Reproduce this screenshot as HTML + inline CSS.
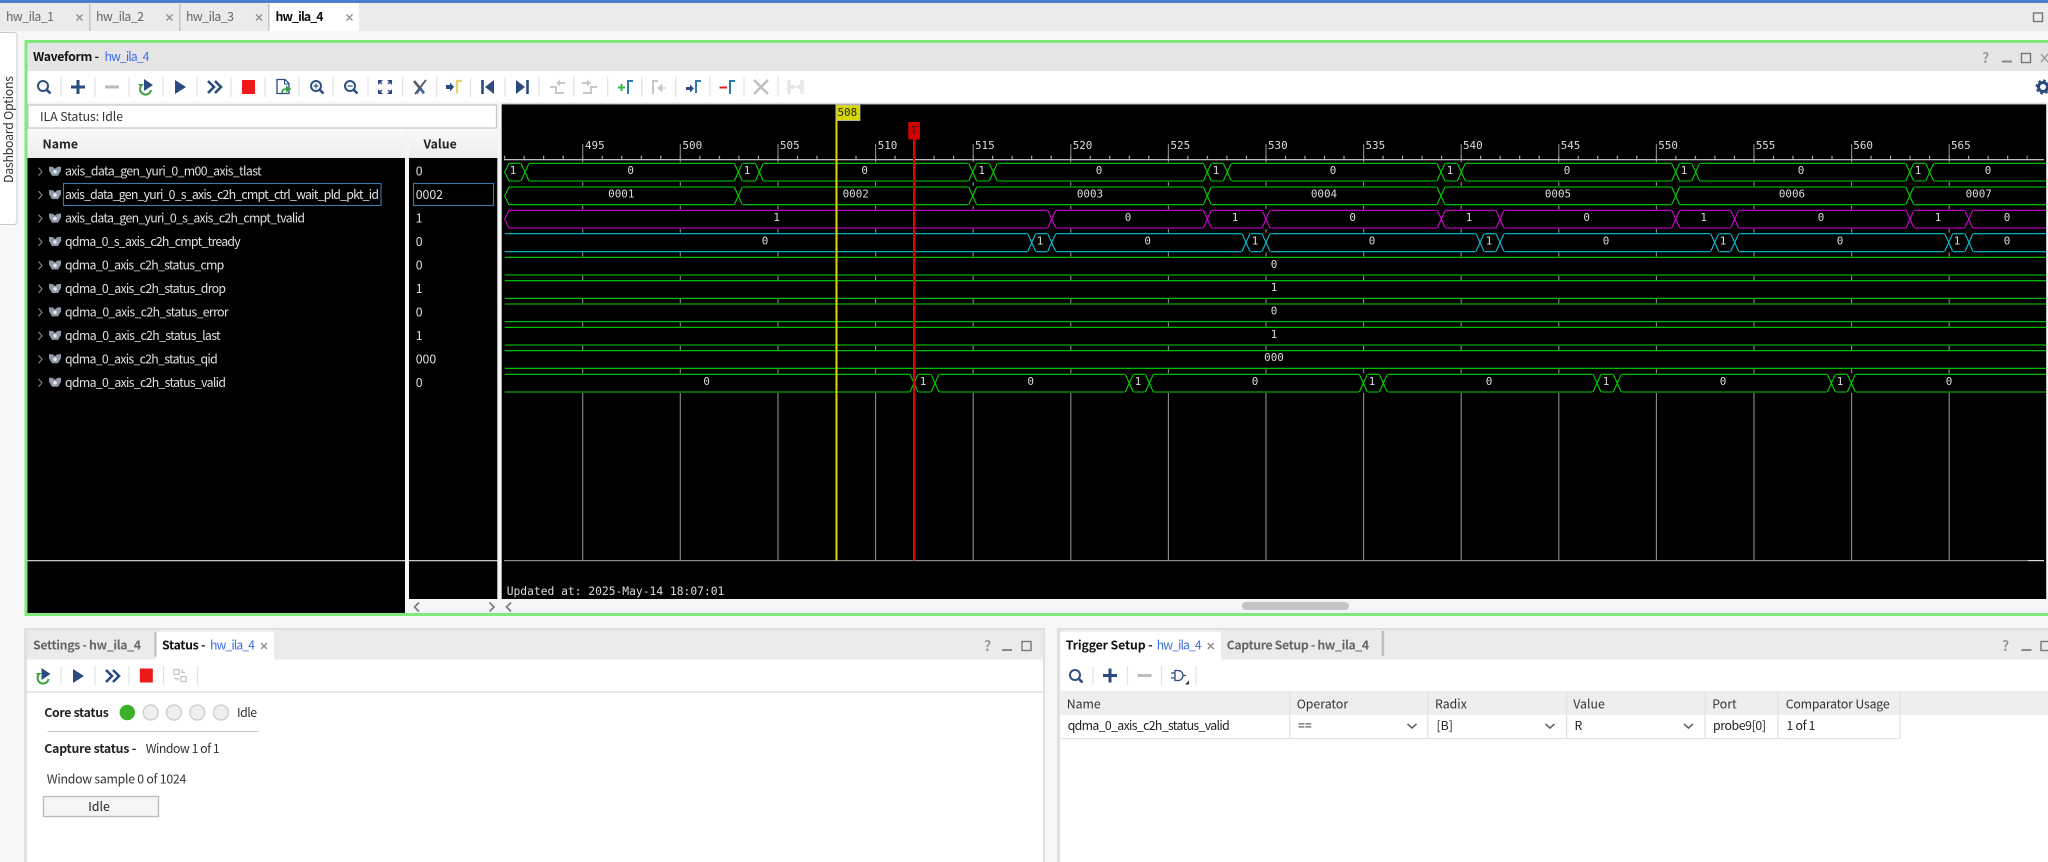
<!DOCTYPE html>
<html>
<head>
<meta charset="utf-8">
<title>hw_ila_4</title>
<style>
html,body{margin:0;padding:0;background:#f7f7f7;width:2048px;height:862px;overflow:hidden}
svg{display:block;position:absolute;left:0;top:0;fill:#222;filter:blur(.3px)}
text{font-family:"Noto Sans CJK JP","Liberation Sans",sans-serif;font-size:12.3px}
.b{font-weight:700}
.l{fill:#3f6fe8}
.g{fill:#666}
.w{fill:#e0e0e0}
.m{font-family:"DejaVu Sans Mono","Liberation Mono",monospace;font-size:10.9px;fill:#dcdcdc}
.mc{text-anchor:middle}
.x{stroke:#888;stroke-width:1.3;fill:none}
</style>
</head>
<body>
<svg width="2048" height="862" viewBox="0 0 2048 862" xmlns="http://www.w3.org/2000/svg">
<defs>
  <g id="c"><rect x="-4.5" y="-1" width="9" height="19.7" fill="#000"/><path d="M-4 0L4 17.7M-4 17.7L4 0" fill="none" stroke="currentColor" stroke-width="1.1"/></g>
  <g id="s"><rect x="503" y="-1" width="6" height="19.7" fill="#000"/><path d="M509 0L504.7 8.85L509 17.7" fill="none" stroke="currentColor" stroke-width="1.1"/></g>
  <pattern id="tick" patternUnits="userSpaceOnUse" x="504.1" y="155" width="19.52" height="5"><rect width="1.1" height="5" fill="#b0b0b0"/></pattern>
  <g id="sig"><path d="M38.5 -4l3.5 4l-3.5 4" fill="none" stroke="#8a8a8a" stroke-width="1.1"/><path d="M49 -5h3.5l2.5 2l2.5-2h3.500v4l-3 5h-6l-3-5z" fill="#8f9aa8"/><circle cx="55" cy="0" r="1.8" fill="#e8e8e8"/></g>
  <g id="i-search"><circle cx="-1" cy="-1" r="5" fill="none" stroke="#2f5080" stroke-width="2"/><path d="M2.800 2.800L6.500 6.500" stroke="#2f5080" stroke-width="2.600"/></g>
  <g id="i-plus"><path d="M-7 0H7M0-7V7" stroke="#2b4a80" stroke-width="3"/></g>
  <g id="i-minus"><path d="M-7 0H7" stroke="#bdbdbd" stroke-width="3"/></g>
  <g id="i-refresh"><path d="M-5-1A5.500 5.500 0 1 0 5 3" fill="none" stroke="#3aa040" stroke-width="2"/><path d="M-8-3l3 3l3-3z" fill="#3aa040"/><path d="M-2-8L7-2L-2 4z" fill="#2b4a80"/></g>
  <g id="i-play"><path d="M-5-7L6 0L-5 7z" fill="#2b4a80"/></g>
  <g id="i-ff"><path d="M-6-6L0 0L-6 6M1-6L7 0L1 6" fill="none" stroke="#2b4a80" stroke-width="2.600"/></g>
  <g id="i-stop"><rect x="-6.500" y="-7" width="13" height="14" fill="#ee1a1a"/></g>
  <g id="i-swap"><path d="M-6-6h5v5h-5zM1 1h5v5h-5z" fill="none" stroke="#c4c4c4" stroke-width="1.300"/><path d="M1-3h4M3-6l-2 3M-6 3h4M-3 5l2-2" fill="none" stroke="#c4c4c4" stroke-width="1.200"/></g>
  <g id="i-gate"><path d="M-3-5h3a5 5 0 0 1 0 10h-3zM-7-2.500h4M-7 2.500h4M5 0h3" fill="none" stroke="#2b4a80" stroke-width="1.300"/><path d="M11 5v4h-4z" fill="#333"/></g>
  <linearGradient id="hd" x1="0" y1="0" x2="0" y2="1"><stop offset="0" stop-color="#fafafa"/><stop offset="1" stop-color="#ececec"/></linearGradient>
</defs>

<!-- top tabs -->
<rect x="0" y="0" width="2048" height="3" fill="#4a7fd2"/>
<rect x="0" y="3" width="2048" height="28" fill="#ebebeb"/>
<rect x="269" y="3" width="90" height="28" fill="#fff"/>
<rect x="89" y="4" width="1.500" height="27" fill="#c4c4c4"/>
<rect x="179" y="4" width="1.500" height="27" fill="#c4c4c4"/>
<rect x="268" y="4" width="1.500" height="27" fill="#c4c4c4"/>
<text x="6" y="21" class="g" textLength="48">hw_ila_1</text>
<text x="96" y="21" class="g" textLength="48">hw_ila_2</text>
<text x="186" y="21" class="g" textLength="48">hw_ila_3</text>
<text x="275.500" y="21" class="b" textLength="48" fill="#111">hw_ila_4</text>
<path class="x" d="M76.500 14.500l6 6m0-6l-6 6M166.500 14.500l6 6m0-6l-6 6M256 14.500l6 6m0-6l-6 6M346.500 14.500l6 6m0-6l-6 6"/>
<rect x="2033.500" y="13" width="9" height="8.500" fill="none" stroke="#777" stroke-width="1.400"/>

<!-- dashboard options side tab -->
<path d="M-2 32.500H14a3 3 0 0 1 3 3V221.500a3 3 0 0 1-3 3H-2z" fill="#fff" stroke="#c8c8c8"/>
<text transform="translate(13,183) rotate(-90)" textLength="107" fill="#333">Dashboard Options</text>

<!-- waveform window -->
<rect x="24.500" y="40" width="2024" height="576" fill="#7fe87f"/>
<rect x="27.500" y="43" width="2021" height="570" fill="#f5f5f5"/>
<rect x="27.500" y="43" width="2021" height="28" fill="#e5e5e5"/>
<rect x="27.500" y="71" width="2021" height="31" fill="#fff"/>
<text x="33" y="61" class="b" fill="#111" textLength="66">Waveform -</text>
<text x="104.500" y="61" class="l" textLength="45">hw_ila_4</text>
<text x="1982" y="63" fill="#999" style="font-size:14px;font-weight:700">?</text>
<rect x="2002" y="60.500" width="10" height="2" fill="#888"/>
<rect x="2021.500" y="53.500" width="9" height="9" fill="none" stroke="#777" stroke-width="1.400"/>
<path d="M2041 54l7 8m0-8l-7 8" stroke="#999" stroke-width="1.400"/>

<!-- waveform toolbar -->
<path d="M61 77v20M95 77v20M129 77v20M163 77v20M197 77v20M231 77v20M265 77v20M299 77v20M333 77v20M368 77v20M402.700 77v20M436.700 77v20M470.500 77v20M505 77v20M539 77v20M573.700 77v20M607.700 77v20M641.700 77v20M675.700 77v20M710 77v20M744 77v20M778 77v20" stroke="#e2e2e2" stroke-width="1.200"/>
<use href="#i-search" x="44" y="87"/>
<use href="#i-plus" x="78" y="87"/>
<use href="#i-minus" x="112" y="87"/>
<use href="#i-refresh" x="146" y="87"/>
<use href="#i-play" x="180" y="87"/>
<use href="#i-ff" x="214" y="87"/>
<use href="#i-stop" x="248.500" y="87"/>
<g transform="translate(283,87)"><path d="M-6-7.500H2L6-3.500V6.500H-6z" fill="#fff" stroke="#2b4a80" stroke-width="1.300"/><path d="M1.500-7.500V-3H6" fill="none" stroke="#2b4a80"/><path d="M-1 6Q-1 2 3 2" fill="none" stroke="#3aa040" stroke-width="1.800"/><path d="M3-1.500L8.500 2L3 5.500z" fill="#3aa040"/></g>
<g transform="translate(317,87)"><use href="#i-search"/><path d="M-3.500-1h5M-1-3.500v5" stroke="#2f5080" stroke-width="1.200"/></g>
<g transform="translate(351,87)"><use href="#i-search"/><path d="M-3.500-1h5" stroke="#2f5080" stroke-width="1.200"/></g>
<g transform="translate(385,87)" fill="#2b4a80"><path d="M-7-7h5l-5 5zM7-7h-5l5 5zM7 7h-5l5-5zM-7 7h5l-5-5z"/><path d="M-5-5l2 2M5-5l-2 2M5 5l-2-2M-5 5l2-2" stroke="#2b4a80" stroke-width="1.400"/></g>
<g transform="translate(420,87)"><path d="M-6-6L4 6" stroke="#5a6068" stroke-width="2.600"/><path d="M6-7L-5 7" stroke="#4a5058" stroke-width="1.800"/><path d="M-3 7L1 1L4 7" fill="none" stroke="#2b6ac0" stroke-width="1.100"/></g>
<g transform="translate(453,87)"><path d="M-7-2h4v-2.500L1 0L-3 4.500V2h-4z" fill="#2b4a80"/><path d="M4 6.500V-6H9" fill="none" stroke="#e8d268" stroke-width="2.200"/></g>
<g transform="translate(488,87)"><path d="M-5.500-7V7" stroke="#2b4a80" stroke-width="2.600"/><path d="M6-7L-3 0L6 7z" fill="#2b4a80"/></g>
<g transform="translate(522,87)"><path d="M5.500-7V7" stroke="#2b4a80" stroke-width="2.600"/><path d="M-6-7L3 0L-6 7z" fill="#2b4a80"/></g>
<g transform="translate(557,87)" fill="none" stroke="#c8c8c8" stroke-width="2"><path d="M-7 0H-1V6H7"/><path d="M8-4H2"/><path d="M3-7.500L-1-4L3-.5z" fill="#c8c8c8" stroke="none"/></g>
<g transform="translate(590,87)" fill="none" stroke="#c8c8c8" stroke-width="2"><path d="M-7 6H1V0H7"/><path d="M-8-4H-2"/><path d="M-3-7.500L1-4L-3-.5z" fill="#c8c8c8" stroke="none"/></g>
<g transform="translate(625,87)"><path d="M-7 0.500H0M-3.500-3V4" stroke="#3ab84a" stroke-width="2"/><path d="M3 7V-6H8" fill="none" stroke="#2c7ab0" stroke-width="2"/></g>
<g transform="translate(659,87)"><path d="M-6 7V-6H-1" fill="none" stroke="#c8c8c8" stroke-width="2"/><path d="M7 1H2M3 -2.500L-1 1L3 4.500z" fill="#c8c8c8" stroke="#c8c8c8"/></g>
<g transform="translate(693,87)"><path d="M-7 0h4v-2.500L1 1.500L-3 5.500V3h-4z" fill="#2b4a80"/><path d="M3 6V-6H8" fill="none" stroke="#2c7ab0" stroke-width="2"/></g>
<g transform="translate(727,87)"><path d="M-7.500 0.500H0" stroke="#e02020" stroke-width="2"/><path d="M3 7V-6H8" fill="none" stroke="#2c7ab0" stroke-width="2"/></g>
<path transform="translate(761,87)" d="M-7-7L7 7M7-7L-7 7" stroke="#bdbdbd" stroke-width="2.400"/>
<g transform="translate(795,87)" fill="none" stroke="#dcdcdc" stroke-width="1.200"><rect x="-7" y="-6" width="2" height="12"/><path d="M-3 0H5M-2 -2L-4 0L-2 2M3-2L5 0L3 2"/><rect x="6" y="-6" width="2" height="12"/></g>
<g transform="translate(2043,87)"><circle r="4.500" fill="none" stroke="#2b4a80" stroke-width="3"/><circle r="6.500" fill="none" stroke="#2b4a80" stroke-width="2" stroke-dasharray="2.600 2.500"/></g>

<!-- ILA status -->
<rect x="28" y="105" width="468.500" height="23" fill="#fff" stroke="#c8c8c8" stroke-width="1.300"/>
<text x="40" y="121" textLength="83" fill="#333">ILA Status:  Idle</text>

<!-- name / value -->
<rect x="27.500" y="129" width="377" height="29.500" fill="url(#hd)"/>
<rect x="409" y="129" width="88" height="29.500" fill="url(#hd)"/>
<text x="42.500" y="148.500" class="b" fill="#222">Name</text>
<text x="423.500" y="148.500" class="b" fill="#222">Value</text>
<rect x="27.500" y="158" width="377.500" height="455" fill="#000"/>
<rect x="409" y="158" width="88.300" height="441" fill="#000"/>
<rect x="27.500" y="560" width="377.500" height="1.300" fill="#c4c4c4"/>
<rect x="409" y="560" width="88.300" height="1.300" fill="#c4c4c4"/>
<path d="M419 602.500l-4.500 4.500l4.500 4.500M489.500 602.500l4.500 4.500l-4.500 4.500M511 602.500l-4.500 4.500l4.500 4.500" fill="none" stroke="#777" stroke-width="1.600"/>
<rect x="1242" y="602" width="107" height="8" rx="4" fill="#c4c4c4"/>

<use href="#sig" y="171.700"/><use href="#sig" y="195.100"/><use href="#sig" y="218.600"/><use href="#sig" y="242"/><use href="#sig" y="265.500"/><use href="#sig" y="289"/><use href="#sig" y="312.400"/><use href="#sig" y="335.900"/><use href="#sig" y="359.300"/><use href="#sig" y="382.800"/>
<rect x="63.500" y="183.500" width="317.500" height="22" fill="none" stroke="#3a7ab0" stroke-width="1.100"/>
<rect x="413.500" y="183.500" width="80" height="22" fill="none" stroke="#3a7ab0" stroke-width="1.100"/>

<text x="65" y="175.700" class="w" textLength="196.700">axis_data_gen_yuri_0_m00_axis_tlast</text>
<text x="65" y="199.100" class="w" textLength="314">axis_data_gen_yuri_0_s_axis_c2h_cmpt_ctrl_wait_pld_pkt_id</text>
<text x="65" y="222.600" class="w" textLength="240">axis_data_gen_yuri_0_s_axis_c2h_cmpt_tvalid</text>
<text x="65" y="246" class="w" textLength="175.700">qdma_0_s_axis_c2h_cmpt_tready</text>
<text x="65" y="269.500" class="w" textLength="159.300">qdma_0_axis_c2h_status_cmp</text>
<text x="65" y="293" class="w" textLength="161">qdma_0_axis_c2h_status_drop</text>
<text x="65" y="316.400" class="w" textLength="163.700">qdma_0_axis_c2h_status_error</text>
<text x="65" y="339.900" class="w" textLength="155.700">qdma_0_axis_c2h_status_last</text>
<text x="65" y="363.300" class="w" textLength="152.700">qdma_0_axis_c2h_status_qid</text>
<text x="65" y="386.800" class="w" textLength="161">qdma_0_axis_c2h_status_valid</text>

<text x="415.700" y="175.700" class="w">0</text>
<text x="415.700" y="199.100" class="w">0002</text>
<text x="415.700" y="222.600" class="w">1</text>
<text x="415.700" y="246" class="w">0</text>
<text x="415.700" y="269.500" class="w">0</text>
<text x="415.700" y="293" class="w">1</text>
<text x="415.700" y="316.400" class="w">0</text>
<text x="415.700" y="339.900" class="w">1</text>
<text x="415.700" y="363.300" class="w">000</text>
<text x="415.700" y="386.800" class="w">0</text>

<!-- wave canvas -->
<rect x="501.700" y="104" width="1544.500" height="495" fill="#000"/>
<rect x="501.700" y="103.500" width="1544.500" height="1" fill="#c0c0c0"/>
<rect x="504.100" y="155.700" width="1523.500" height="4" fill="url(#tick)"/>
<path d="M582.700 144V560M680.300 144V560M778 144V560M875.600 144V560M973.200 144V560M1070.800 144V560M1168.400 144V560M1266 144V560M1363.600 144V560M1461.200 144V560M1558.800 144V560M1656.400 144V560M1754 144V560M1851.600 144V560M1949.200 144V560" stroke="#8c8c8c" stroke-width="1.100"/>
<rect x="504" y="159" width="1540" height="1.300" fill="#bcbcbc"/>
<rect x="504" y="560" width="1524" height="1.200" fill="#8c8c8c"/>
<rect x="2028" y="560" width="16" height="1.200" fill="#dcdcdc"/>

<g>
<text x="585" y="149" class="m">495</text><text x="682.500" y="149" class="m">500</text><text x="780" y="149" class="m">505</text><text x="877.700" y="149" class="m">510</text><text x="975" y="149" class="m">515</text><text x="1072.700" y="149" class="m">520</text><text x="1170.500" y="149" class="m">525</text><text x="1268" y="149" class="m">530</text><text x="1365.500" y="149" class="m">535</text><text x="1463" y="149" class="m">540</text><text x="1560.700" y="149" class="m">545</text><text x="1658.300" y="149" class="m">550</text><text x="1755.700" y="149" class="m">555</text><text x="1853.300" y="149" class="m">560</text><text x="1951" y="149" class="m">565</text>
</g>

<!-- row 1 -->
<g transform="translate(0,163.300)" style="color:#00d400"><rect x="504" y="-1" width="1542" height="19.700" fill="#000"/><path d="M504.700 0H2046M504.700 17.700H2046" fill="none" stroke="currentColor" stroke-width="1.100"/><use href="#s"/>
<use href="#c" x="525"/><use href="#c" x="738.300"/><use href="#c" x="759.300"/><use href="#c" x="972.700"/><use href="#c" x="993.300"/><use href="#c" x="1207.300"/><use href="#c" x="1227.300"/><use href="#c" x="1441"/><use href="#c" x="1461.300"/><use href="#c" x="1675.700"/><use href="#c" x="1695.700"/><use href="#c" x="1909.700"/><use href="#c" x="1929.700"/></g>
<!-- row 2 -->
<g transform="translate(0,187)" style="color:#00d400"><rect x="504" y="-1" width="1542" height="19.700" fill="#000"/><path d="M504.700 0H2046M504.700 17.700H2046" fill="none" stroke="currentColor" stroke-width="1.100"/><use href="#s"/>
<use href="#c" x="738.300"/><use href="#c" x="972.700"/><use href="#c" x="1207.300"/><use href="#c" x="1441"/><use href="#c" x="1675.700"/><use href="#c" x="1909.700"/></g>
<!-- row 3 -->
<g transform="translate(0,210.300)" style="color:#d800d8"><rect x="504" y="-1" width="1542" height="19.700" fill="#000"/><path d="M504.700 0H2046M504.700 17.700H2046" fill="none" stroke="currentColor" stroke-width="1.100"/><use href="#s"/>
<use href="#c" x="1051.700"/><use href="#c" x="1207.300"/><use href="#c" x="1266"/><use href="#c" x="1441.300"/><use href="#c" x="1500"/><use href="#c" x="1675.700"/><use href="#c" x="1734.700"/><use href="#c" x="1910"/><use href="#c" x="1968.700"/></g>
<!-- row 4 -->
<g transform="translate(0,233.700)" style="color:#00c4d8"><rect x="504" y="-1" width="1542" height="19.700" fill="#000"/><path d="M504.700 0H2046M504.700 18H2046" fill="none" stroke="currentColor" stroke-width="1.100"/>
<use href="#c" x="1031.700"/><use href="#c" x="1051.700"/><use href="#c" x="1246"/><use href="#c" x="1266"/><use href="#c" x="1480"/><use href="#c" x="1500"/><use href="#c" x="1714.700"/><use href="#c" x="1734.700"/><use href="#c" x="1948.700"/><use href="#c" x="1969"/></g>
<!-- rows 5-9 -->
<g fill="#000"><rect x="504" y="256.500" width="1542" height="19.500"/><rect x="504" y="280" width="1542" height="19"/><rect x="504" y="303.200" width="1542" height="19.300"/><rect x="504" y="326.500" width="1542" height="19.300"/><rect x="504" y="350" width="1542" height="19"/></g>
<path d="M504.700 257.300H2046M504.700 275H2046M504.700 280.700H2046M504.700 298.300H2046M504.700 304H2046M504.700 321.700H2046M504.700 327.300H2046M504.700 345H2046M504.700 350.700H2046M504.700 368.300H2046" fill="none" stroke="#00d400" stroke-width="1.100"/>
<!-- row 10 -->
<g transform="translate(0,374.300)" style="color:#00d400"><rect x="504" y="-1" width="1542" height="19.700" fill="#000"/><path d="M504.700 0H2046M504.700 17.700H2046" fill="none" stroke="currentColor" stroke-width="1.100"/>
<use href="#c" x="914"/><use href="#c" x="935"/><use href="#c" x="1129.300"/><use href="#c" x="1149.300"/><use href="#c" x="1363.300"/><use href="#c" x="1383.300"/><use href="#c" x="1597"/><use href="#c" x="1617.300"/><use href="#c" x="1831.300"/><use href="#c" x="1851.300"/></g>

<!-- wave labels -->
<g>
<text class="m mc" x="513" y="174">1</text><text class="m mc" x="630.700" y="174">0</text><text class="m mc" x="747" y="174">1</text><text class="m mc" x="864.700" y="174">0</text><text class="m mc" x="981.700" y="174">1</text><text class="m mc" x="1099" y="174">0</text><text class="m mc" x="1216" y="174">1</text><text class="m mc" x="1333" y="174">0</text><text class="m mc" x="1450" y="174">1</text><text class="m mc" x="1567" y="174">0</text><text class="m mc" x="1684" y="174">1</text><text class="m mc" x="1801" y="174">0</text><text class="m mc" x="1918" y="174">1</text><text class="m mc" x="1988" y="174">0</text>
<text class="m mc" x="621.300" y="197.500">0001</text><text class="m mc" x="855.700" y="197.500">0002</text><text class="m mc" x="1090" y="197.500">0003</text><text class="m mc" x="1324" y="197.500">0004</text><text class="m mc" x="1558" y="197.500">0005</text><text class="m mc" x="1792" y="197.500">0006</text><text class="m mc" x="1978.700" y="197.500">0007</text>
<text class="m mc" x="776.700" y="221">1</text><text class="m mc" x="1128" y="221">0</text><text class="m mc" x="1235" y="221">1</text><text class="m mc" x="1352.700" y="221">0</text><text class="m mc" x="1469" y="221">1</text><text class="m mc" x="1586.700" y="221">0</text><text class="m mc" x="1703.700" y="221">1</text><text class="m mc" x="1821" y="221">0</text><text class="m mc" x="1938" y="221">1</text><text class="m mc" x="2007" y="221">0</text>
<text class="m mc" x="765" y="244.500">0</text><text class="m mc" x="1040" y="244.500">1</text><text class="m mc" x="1147.700" y="244.500">0</text><text class="m mc" x="1255" y="244.500">1</text><text class="m mc" x="1372" y="244.500">0</text><text class="m mc" x="1489" y="244.500">1</text><text class="m mc" x="1606" y="244.500">0</text><text class="m mc" x="1723" y="244.500">1</text><text class="m mc" x="1840" y="244.500">0</text><text class="m mc" x="1957" y="244.500">1</text><text class="m mc" x="2007" y="244.500">0</text>
<text class="m mc" x="1274" y="268">0</text><text class="m mc" x="1274" y="291">1</text><text class="m mc" x="1274" y="314.500">0</text><text class="m mc" x="1274" y="338">1</text><text class="m mc" x="1274" y="361">000</text>
<text class="m mc" x="706.700" y="385">0</text><text class="m mc" x="923" y="385">1</text><text class="m mc" x="1030.700" y="385">0</text><text class="m mc" x="1138" y="385">1</text><text class="m mc" x="1255" y="385">0</text><text class="m mc" x="1372" y="385">1</text><text class="m mc" x="1489" y="385">0</text><text class="m mc" x="1606" y="385">1</text><text class="m mc" x="1723" y="385">0</text><text class="m mc" x="1840" y="385">1</text><text class="m mc" x="1949" y="385">0</text>
</g>

<!-- cursors -->
<rect x="835.500" y="104" width="2" height="456.500" fill="#e6d800"/>
<rect x="836" y="105" width="24" height="15.500" fill="#d8d800" stroke="#c0c0c0" stroke-width=".8"/>
<text class="m" x="837.500" y="116" style="fill:#222">508</text>
<rect x="913" y="122" width="2" height="438.500" fill="#e80000"/>
<rect x="908.300" y="122" width="11.700" height="17.500" fill="#d40000"/>
<text class="m" x="910.700" y="134" style="fill:#222">T</text>
<text class="m" x="506.700" y="595" style="font-size:11.300px">Updated at: 2025-May-14 18:07:01</text>

<!-- bottom left panel -->
<rect x="24" y="628" width="1021" height="234" fill="#e0e0e0"/>
<rect x="27" y="630" width="1016" height="232" fill="#fff"/>
<rect x="27" y="630" width="1016" height="29.500" fill="#ebebeb"/>
<rect x="156" y="631.700" width="118" height="28" fill="#fff"/>
<rect x="154.500" y="631.700" width="2" height="25" fill="#bdbdbd"/>
<text x="33" y="649.500" class="b g" textLength="108">Settings - hw_ila_4</text>
<text x="162" y="649.500" class="b" fill="#111" textLength="43.500">Status -</text>
<text x="210" y="649.500" class="l" textLength="45">hw_ila_4</text>
<path class="x" d="M261 643l6 6m0-6l-6 6"/>
<text x="984" y="651" fill="#999" style="font-size:14px;font-weight:700">?</text>
<rect x="1002" y="649" width="10" height="2" fill="#888"/>
<rect x="1022" y="641.500" width="9" height="9" fill="none" stroke="#777" stroke-width="1.400"/>
<path d="M61 666v19M95 666v19M129 666v19M163.500 666v19M197.500 666v19" stroke="#e2e2e2" stroke-width="1.200"/>
<use href="#i-refresh" x="43.500" y="676"/>
<use href="#i-play" x="78" y="676"/>
<use href="#i-ff" x="112" y="676"/>
<use href="#i-stop" x="146.300" y="675.500"/>
<use href="#i-swap" x="180" y="675.500"/>
<rect x="27" y="691" width="1016" height="2" fill="#e8e8e8"/>
<text x="44.300" y="717" class="b" fill="#222" textLength="64.500">Core status</text>
<circle cx="127.300" cy="712.500" r="7.700" fill="#3cb028"/>
<g fill="#efefef" stroke="#c8c8c8" stroke-width="1.200"><circle cx="150.700" cy="712.500" r="7.500"/><circle cx="174" cy="712.500" r="7.500"/><circle cx="197.300" cy="712.500" r="7.500"/><circle cx="221" cy="712.500" r="7.500"/></g>
<text x="237" y="717" fill="#333" textLength="20">Idle</text>
<rect x="47.500" y="731" width="210.500" height="1" fill="#c4c4c4"/>
<text x="44.300" y="753" class="b" fill="#222" textLength="92">Capture status -</text>
<text x="145.700" y="753" fill="#333" textLength="74">Window 1 of 1</text>
<text x="46.800" y="783.300" fill="#333" textLength="139.500">Window sample 0 of 1024</text>
<rect x="43.500" y="796.500" width="115" height="20" fill="#f5f5f5" stroke="#bbb" stroke-width="1.300"/>
<text x="99" y="811" fill="#222" text-anchor="middle">Idle</text>

<!-- bottom right panel -->
<rect x="1057" y="628" width="991" height="234" fill="#e0e0e0"/>
<rect x="1060" y="630" width="988" height="232" fill="#fff"/>
<rect x="1060" y="630" width="988" height="29.500" fill="#ebebeb"/>
<rect x="1060" y="631.700" width="161" height="28" fill="#fff"/>
<rect x="1381.700" y="631" width="2.500" height="25" fill="#bbb"/>
<text x="1065.700" y="649.500" class="b" fill="#111" textLength="87">Trigger Setup -</text>
<text x="1156.700" y="649.500" class="l" textLength="45">hw_ila_4</text>
<path class="x" d="M1207.700 643l6 6m0-6l-6 6"/>
<text x="1226.700" y="649.500" class="b g" textLength="142.500">Capture Setup - hw_ila_4</text>
<text x="2002" y="651" fill="#999" style="font-size:14px;font-weight:700">?</text>
<rect x="2021.500" y="649" width="10" height="2" fill="#888"/>
<rect x="2041" y="641.500" width="9" height="9" fill="none" stroke="#777" stroke-width="1.400"/>
<path d="M1093 666v19M1127.500 666v19M1161.500 666v19M1196 666v19" stroke="#e2e2e2" stroke-width="1.200"/>
<use href="#i-search" x="1076" y="676"/>
<use href="#i-plus" x="1110" y="675.500"/>
<use href="#i-minus" x="1144.500" y="675.500"/>
<use href="#i-gate" x="1178" y="675.500"/>
<rect x="1060" y="691" width="988" height="24" fill="#eeeeee"/>
<rect x="1060" y="715" width="840" height="23" fill="#fff"/>
<rect x="1060" y="738" width="840.500" height="1.200" fill="#e4e4e4"/>
<path d="M1289.700 692v46M1427.700 692v46M1566.700 692v46M1705 692v46M1778 692v46M1900 692v46" stroke="#e4e4e4" stroke-width="1.400"/>
<text x="1066.700" y="708.500" fill="#333">Name</text>
<text x="1296.700" y="708.500" fill="#333">Operator</text>
<text x="1435" y="708.500" fill="#333">Radix</text>
<text x="1573.300" y="708.500" fill="#333">Value</text>
<text x="1712.300" y="708.500" fill="#333">Port</text>
<text x="1785.700" y="708.500" fill="#333" textLength="104">Comparator Usage</text>
<text x="1067.700" y="729.800" fill="#222" textLength="162">qdma_0_axis_c2h_status_valid</text>
<text x="1298" y="729.800" fill="#222">==</text>
<text x="1436.500" y="729.800" fill="#222">[B]</text>
<text x="1574.500" y="729.800" fill="#222">R</text>
<text x="1713" y="729.800" fill="#222" textLength="53">probe9[0]</text>
<text x="1786.500" y="729.800" fill="#222" textLength="29">1 of 1</text>
<path d="M1407.500 724l4.500 4l4.500-4M1545.500 724l4.500 4l4.500-4M1684 724l4.500 4l4.500-4" fill="none" stroke="#666" stroke-width="1.600"/>
</svg>
</body>
</html>
